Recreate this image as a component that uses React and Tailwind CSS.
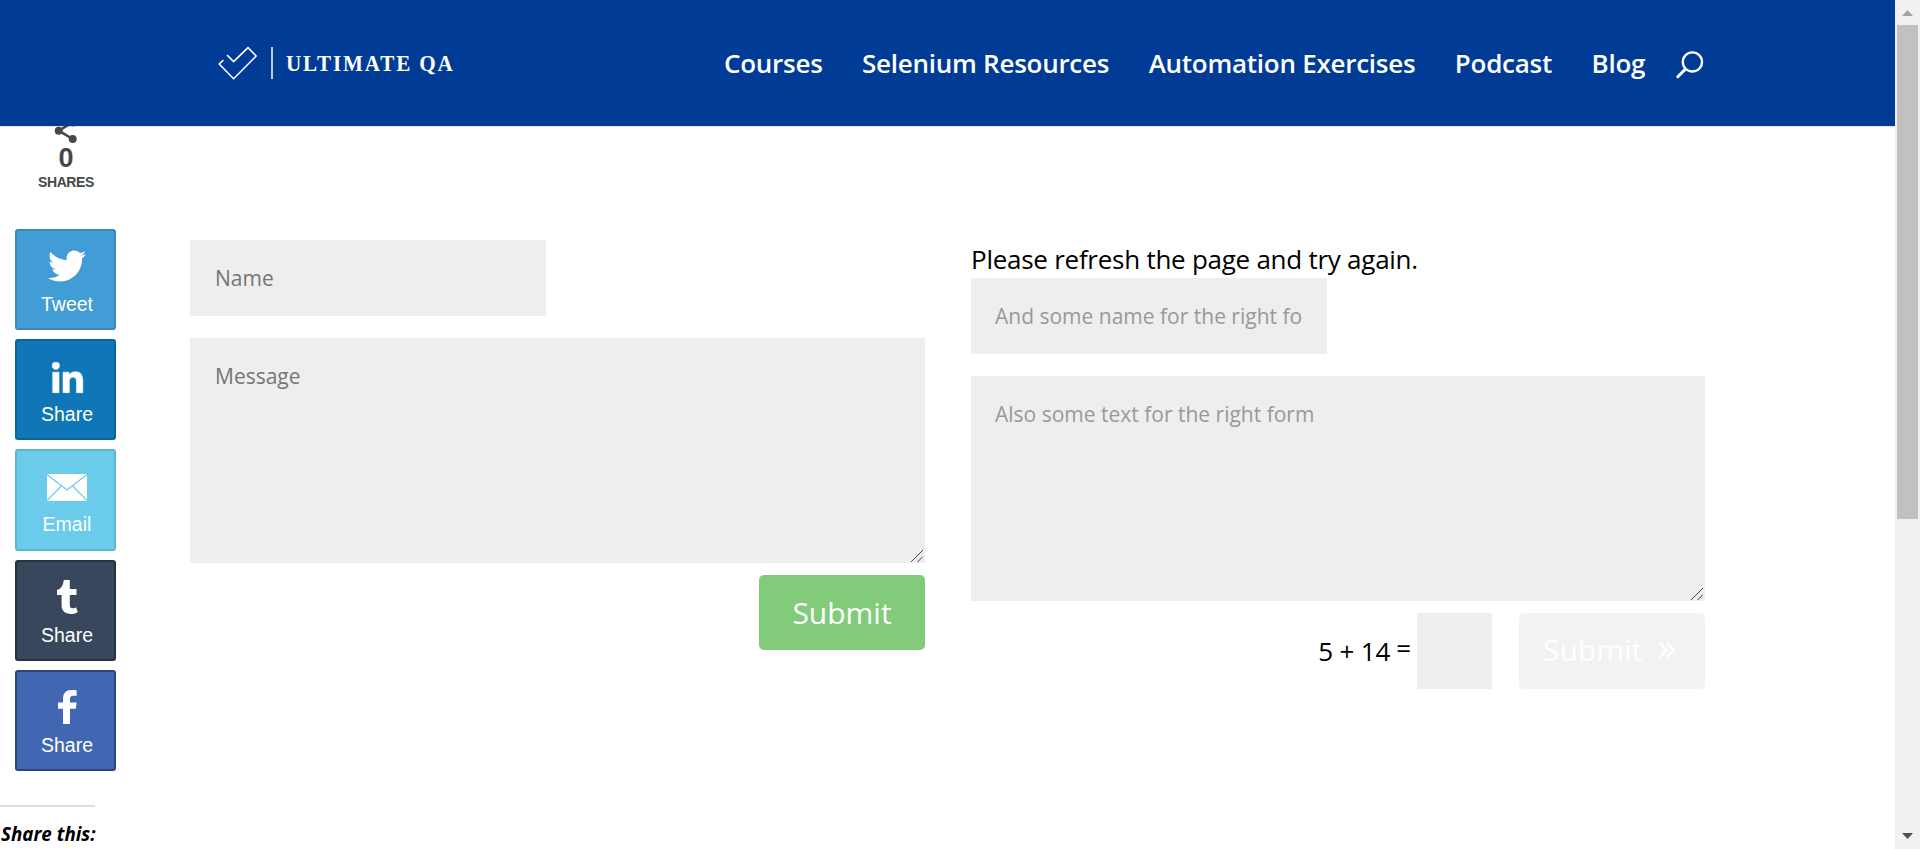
import React from "react";
import { FaTwitter, FaLinkedinIn } from "react-icons/fa";

const nav = ["Courses", "Selenium Resources", "Automation Exercises", "Podcast", "Blog"];

function Header() {
  return (
    <header className="relative z-10 flex h-[126px] shrink-0 items-center bg-[#003b95] pl-[218px] text-white shadow-[0_1px_0_rgba(0,0,0,0.1)]">
      <a className="flex items-center">
        <svg className="h-[34px] w-[40px]" viewBox="0 0 40 34" fill="none" stroke="white" strokeWidth="1.6" strokeLinejoin="round">
          <path d="M5.4 14.2 1.2 18 15.6 32.8 38.2 10 30 1.6 15.6 15.6 9 9" />
        </svg>
        <span className="ml-[13px] h-8 w-[2px] bg-white/75" />
        <span className="ml-[13px] w-[191px] origin-left scale-x-[0.918] whitespace-nowrap font-['Liberation_Serif',serif] text-[23px] leading-none font-bold tracking-[2px]">
          ULTIMATE QA
        </span>
      </a>
      <nav className="ml-[247px] flex items-center gap-[39.5px] whitespace-nowrap text-[26px] font-semibold tracking-[-0.26px]">
        {nav.map((n) => (
          <a key={n}>{n}</a>
        ))}
      </nav>
      <svg className="mt-[3px] ml-[31px] h-7 w-7" viewBox="0 0 28 28" fill="none" stroke="white" strokeWidth="2.3" strokeLinecap="round">
        <ellipse cx="16.4" cy="10.9" rx="9.6" ry="9.6" />
        <path d="M9.2 18.4 1.8 25.8" strokeWidth="3" />
      </svg>
    </header>
  );
}

const LinkedIn = () => <FaLinkedinIn size={35} className="mt-[3px]" stroke="white" strokeWidth="8" />;
const Mail = () => (
  <svg className="h-[27px] w-10" viewBox="0 0 40 27">
    <path fill="white" d="M0 0H40V27H0Z" />
    <path d="M0 0.5 20 16 40 0.5M0 26.5 14.3 12M40 26.5 25.7 12" fill="none" stroke="#6accea" strokeWidth="1.2" />
  </svg>
);
const Tumblr = () => (
  <svg className="-mt-[4px] h-[34px] w-[21px]" viewBox="0 0 21 34">
    <path fill="white" d="M6.8 0H12.8V9H19.5V15H12.8V24.5C12.8 27.6 14 28.2 15.5 28.2 17 28.2 18 27.8 19 27.2L20.8 32C18.6 33.4 16.8 34 14 34 8.2 34 4.6 31 4.6 25.6V15H0V10C4.4 8.8 6.2 5 6.8 0Z" />
  </svg>
);
const Facebook = () => (
  <svg className="-mt-[3px] h-[34px] w-[19px]" viewBox="0 0 19 34">
    <path fill="white" d="M5 34V18.8H0V12.6H5V9C5 3 8.2 0 13.4 0 15.8 0 17.6.2 18.6.4V5.8H15.2C12.6 5.8 12 7 12 9.2V12.6H18.6L17.8 18.8H12V34Z" />
  </svg>
);

const shares = [
  ["Tweet", "mb-[9px] h-[101px] bg-[#429cd6] border-[#3b87b6]", <FaTwitter size={38} className="-mt-[3px]" />],
  ["Share", "mb-[9px] h-[101px] bg-[#0f77b7] border-[#0d6597]", <LinkedIn />],
  ["Email", "mb-[9px] h-[102px] bg-[#6accea] border-[#5cb6d0]", <Mail />],
  ["Share", "mb-[9px] h-[101px] bg-[#39475d] border-[#27313f]", <Tumblr />],
  ["Share", "h-[101px] bg-[#4267b2] border-[#2d4678]", <Facebook />],
];

function ShareBar() {
  return (
    <aside className="w-[190px] shrink-0">
      <div className="flex h-[103px] w-[132px] flex-col items-center font-['Liberation_Sans',sans-serif] font-bold text-[#464849]">
        <svg className="h-[18px] w-6" viewBox="0 0 24 18">
          <g fill="#464849" stroke="#464849">
            <circle cx="4.7" cy="4.7" r="4" stroke="none" />
            <circle cx="18.7" cy="13" r="4" stroke="none" />
            <circle cx="18.7" cy="-3.6" r="4" stroke="none" />
            <path d="M18.7 13 4.7 4.7 18.7-3.6" fill="none" strokeWidth="2.6" />
          </g>
        </svg>
        <span className="text-[27px] leading-[28px]">0</span>
        <span className="mt-[2px] text-[14px] leading-[16px] tracking-[-0.4px]">SHARES</span>
      </div>
      <div className="flex flex-col pl-[15px] font-['Liberation_Sans',sans-serif] text-[19.5px] text-white">
        {shares.map(([label, cls, icon], i) => (
          <button key={i} className={"flex w-[101px] flex-col items-center rounded-[3px] border-2 pt-[18px] pl-[3px] " + cls}>
            <span className="flex h-[37px] items-center">{icon}</span>
            <span className="mt-[7px] leading-[22px]">{label}</span>
          </button>
        ))}
      </div>
      <div className="mt-[34px] w-[95px] border-t-2 border-[#ddd]" />
      <p className="mt-[15px] ml-px text-[18.8px] leading-6 font-bold whitespace-nowrap text-black italic">Share this:</p>
    </aside>
  );
}

function Field({ placeholder, tone }) {
  return <input placeholder={placeholder} className={"block h-[76px] w-[356px] bg-[#eee] px-6 text-[21px] " + tone} />;
}

function Area({ placeholder, tone }) {
  return (
    <div className="relative mt-[22px] h-[225px] w-full">
      <textarea placeholder={placeholder} className={"block h-full w-full resize-none bg-[#eee] px-6 py-[23px] text-[21px] leading-[30px] " + tone} />
      <svg className="absolute right-[2px] bottom-[1px] h-3 w-3" viewBox="0 0 12 12" stroke="#444" strokeWidth="1">
        <path d="M0 12 12 0M6.5 12 12 6.5" />
      </svg>
    </div>
  );
}

function Forms() {
  return (
    <main className="flex pt-[114px]">
      <form className="w-[735px]">
        <Field placeholder="Name" tone="indent-px placeholder:text-[#757575]" />
        <Area placeholder="Message" tone="indent-px placeholder:text-[#757575]" />
        <button type="button" className="mt-3 ml-auto block h-[75px] w-[166px] rounded-[5px] bg-[#81cb7b] text-[30px] text-white">
          Submit
        </button>
      </form>
      <form className="ml-[46px] w-[734px]">
        <p className="h-[38px] text-[26px] leading-[38px] tracking-[-0.26px] whitespace-nowrap text-black">Please refresh the page and try again.</p>
        <Field placeholder="And some name for the right fo" tone="placeholder:text-[#999]" />
        <Area placeholder="Also some text for the right form" tone="placeholder:text-[#999]" />
        <div className="mt-3 flex h-[76px] items-center justify-end text-[26px] text-black">
          <span className="tracking-[-0.2px] whitespace-nowrap">5 + 14</span>
          <span className="mt-[-5px] ml-[6px]">=</span>
          <input className="ml-[6px] h-full w-[75px] bg-[#eee]" />
          <button type="button" className="ml-[27px] flex h-full w-[186px] items-center rounded-[5px] bg-[#f2f2f2] pb-[3px] pl-[24px] text-[30px] text-white">
            Submit
            <svg className="ml-[17px] h-4 w-4" viewBox="0 0 16 16" fill="none" stroke="white" strokeWidth="2.4" strokeLinecap="round" strokeLinejoin="round">
              <path d="M1.5 1.5 7.5 8 1.5 14.5M8.5 1.5 14.5 8 8.5 14.5" />
            </svg>
          </button>
        </div>
      </form>
    </main>
  );
}

function Scrollbar() {
  return (
    <div className="flex w-[25px] shrink-0 flex-col items-center bg-[#f1f1f1]">
      <svg className="h-[25px] w-[25px] shrink-0" viewBox="0 0 25 25">
        <path d="M7 16 12.5 10 18 16Z" fill="#a3a3a3" />
      </svg>
      <div className="h-[494px] w-[21px] bg-[#c1c1c1]" />
      <svg className="mt-auto h-[25px] w-[25px]" viewBox="0 0 25 25">
        <path d="M7 9 12.5 15 18 9Z" fill="#505050" />
      </svg>
    </div>
  );
}

export default function App() {
  return (
    <div className="flex h-[849px] w-full overflow-hidden bg-white font-['Open_Sans',sans-serif]">
      <div className="flex min-w-0 flex-1 flex-col">
        <Header />
        <div className="flex min-h-0 flex-1">
          <ShareBar />
          <Forms />
        </div>
      </div>
      <Scrollbar />
    </div>
  );
}
